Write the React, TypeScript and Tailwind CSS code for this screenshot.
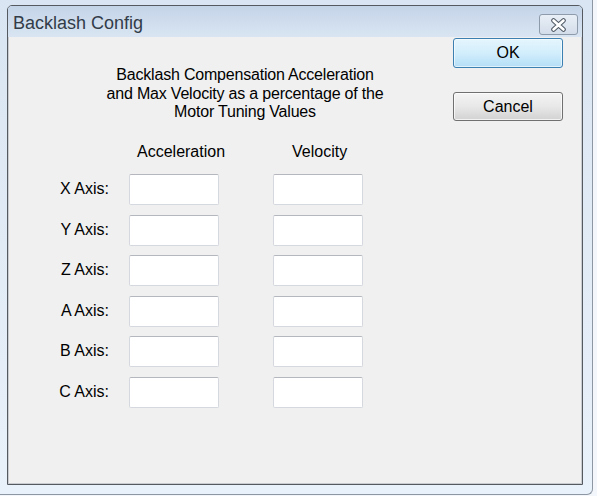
import React from 'react';

const axes = ['X', 'Y', 'Z', 'A', 'B', 'C'];
// row top margins (px) so the rows land at 174, 215, 255, 296, 336, 377
const rowGap = ['mt-[13px]', 'mt-[10px]', 'mt-[9px]', 'mt-[10px]', 'mt-[9px]', 'mt-[10px]'];

function AxisInput() {
  return (
    <div className="w-[90px] h-[31px] bg-white border border-[#d5d8de] border-t-[#b4b7bd] rounded-[2px]" />
  );
}

export default function App() {
  return (
    <div className="w-[597px] h-[496px] bg-[#f3f7fb] overflow-hidden" style={{ fontFamily: '"Liberation Sans", Arial, sans-serif' }}>
      {/* outer frame */}
      <div className="w-[593px] h-[495px] bg-gradient-to-b from-[#d9e5f2] to-[#e9f1fa] border-r border-b border-[#8d97a4] rounded-br-[6px] pl-[7px] pt-[5px]">
        {/* window */}
        <div className="w-[576px] h-[480px] border border-[#555a60] rounded-t-[5px] flex flex-col">
          {/* title bar */}
          <div className="h-[31px] bg-gradient-to-b from-[#c4d4e8] to-[#d9e5f2] flex items-center justify-between pl-[5px] pr-[4px] rounded-t-[4px]">
            <span className="text-[18px] text-[#323c49] leading-none mt-[2px]">Backlash Config</span>
            <button className="w-[39px] h-[21px] mt-[6px] rounded-[3px] border border-[#8e9bab] bg-gradient-to-b from-[#e9eff6] to-[#d3ddea] flex items-center justify-center">
              <svg width="17" height="14" viewBox="0 0 17 14">
                <path d="M3.5 2.5 L13.5 11.5 M13.5 2.5 L3.5 11.5" stroke="#4f5964" strokeWidth="4.6" strokeLinecap="round" />
                <path d="M3.5 2.5 L13.5 11.5 M13.5 2.5 L3.5 11.5" stroke="#ffffff" strokeWidth="2.6" strokeLinecap="round" />
              </svg>
            </button>
          </div>

          {/* client area */}
          <div className="flex-1 bg-[#f0f0f0] border border-t-0 border-[#c9ccd1] flex text-[16px] text-black">
            {/* form */}
            <div className="w-[444px] flex flex-col">
              <div className="ml-[86px] w-[300px] mt-[29px] text-center leading-[18.5px] tracking-[-0.2px]">
                Backlash Compensation Acceleration
                <br />
                and Max Velocity as a percentage of the
                <br />
                Motor Tuning Values
              </div>

              <div className="flex mt-[21px] leading-[18px]">
                <span className="ml-[128px]">Acceleration</span>
                <span className="ml-[67px]">Velocity</span>
              </div>

              {axes.map((a, i) => (
                <div key={a} className={`flex items-center h-[31px] ${rowGap[i]}`}>
                  <div className="w-[100px] text-right leading-[18px]">{a} Axis:</div>
                  <div className="ml-[20px]">
                    <AxisInput />
                  </div>
                  <div className="ml-[54px]">
                    <AxisInput />
                  </div>
                </div>
              ))}
            </div>

            {/* buttons */}
            <div className="w-[110px] flex flex-col">
              <button className="h-[30px] mt-[1px] rounded-[3px] border border-[#3c7fb1] bg-gradient-to-b from-[#e5f5fd] via-[#d2eefc] to-[#b4def6] shadow-[inset_0_0_0_1px_rgba(255,255,255,0.6)] text-[16px] text-black">
                OK
              </button>
              <button className="h-[29px] mt-[24px] rounded-[3px] border border-[#707070] bg-gradient-to-b from-[#f4f4f4] via-[#e8e8e8] to-[#d2d2d2] shadow-[inset_0_0_0_1px_rgba(255,255,255,0.7)] text-[16px] text-black">
                Cancel
              </button>
            </div>
          </div>
        </div>
      </div>
    </div>
  );
}
